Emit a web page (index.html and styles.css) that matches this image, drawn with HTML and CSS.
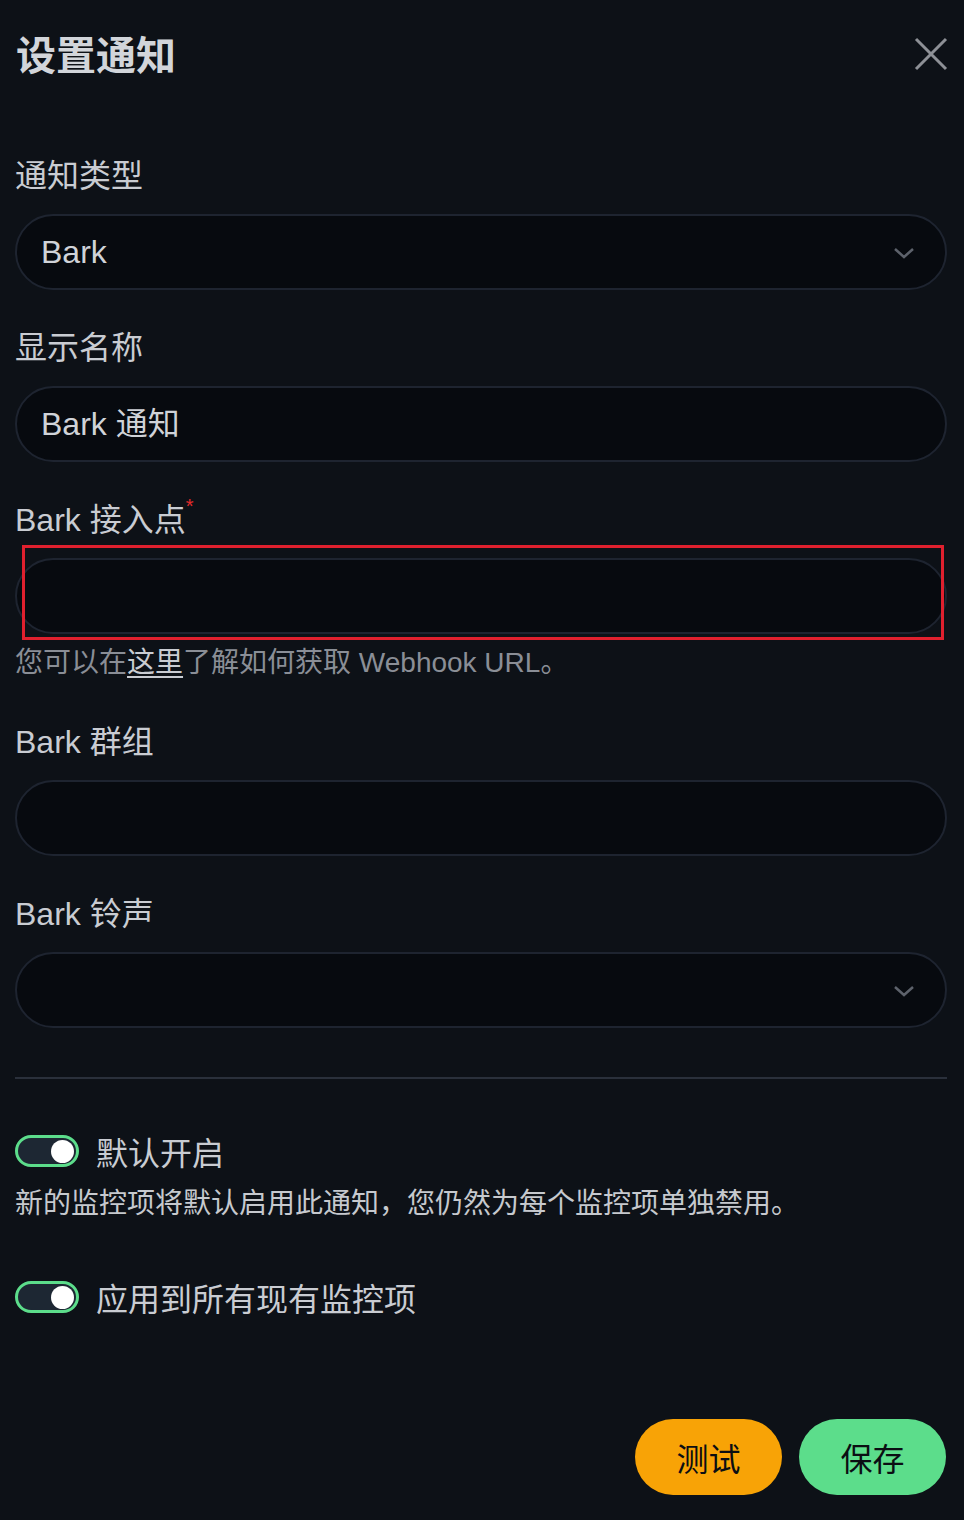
FILE: index.html
```html
<!DOCTYPE html>
<html lang="zh-CN">
<head>
    <meta charset="UTF-8">
    <meta name="viewport" content="width=device-width, initial-scale=1.0">
    <title>设置通知</title>
    <link rel="stylesheet" href="styles.css">
</head>
<body>
    <div class="modal">
        <div class="modal-header">
            <h1 class="modal-title">设置通知</h1>
            <button class="btn-close" aria-label="关闭">
                <svg width="34" height="34" viewBox="0 0 34 34">
                    <path d="M2 2 L32 32 M32 2 L2 32" stroke="#8d9096" stroke-width="3" fill="none"/>
                </svg>
            </button>
        </div>

        <div class="field">
            <label class="form-label">通知类型</label>
            <div class="form-select">
                <span>Bark</span>
                <svg class="chevron" width="22" height="14" viewBox="0 0 22 14">
                    <path d="M2 3 L11 11 L20 3" stroke="#5d626b" stroke-width="2.5" fill="none"/>
                </svg>
            </div>
        </div>

        <div class="field">
            <label class="form-label">显示名称</label>
            <div class="form-control">Bark 通知</div>
        </div>

        <div class="field">
            <label class="form-label">Bark 接入点<span class="required">*</span></label>
            <div class="input-wrap">
                <div class="form-control"></div>
                <div class="highlight"></div>
            </div>
            <div class="form-text">您可以在<a href="#">这里</a>了解如何获取 Webhook URL。</div>
        </div>

        <div class="field">
            <label class="form-label">Bark 群组</label>
            <div class="form-control"></div>
        </div>

        <div class="field">
            <label class="form-label">Bark 铃声</label>
            <div class="form-select">
                <span></span>
                <svg class="chevron" width="22" height="14" viewBox="0 0 22 14">
                    <path d="M2 3 L11 11 L20 3" stroke="#5d626b" stroke-width="2.5" fill="none"/>
                </svg>
            </div>
        </div>

        <hr class="divider">

        <div class="switch-row">
            <span class="switch"><span class="knob"></span></span>
            <span class="switch-label">默认开启</span>
        </div>
        <div class="switch-desc">新的监控项将默认启用此通知，您仍然为每个监控项单独禁用。</div>

        <div class="switch-row second">
            <span class="switch"><span class="knob"></span></span>
            <span class="switch-label">应用到所有现有监控项</span>
        </div>

        <div class="modal-footer">
            <button class="btn btn-warning">测试</button>
            <button class="btn btn-primary">保存</button>
        </div>
    </div>
</body>
</html>
```

FILE: styles.css
```css
body {
    margin: 0;
    background-color: #0d1117;
    color: #c9ccd2;
    font-family: 'Liberation Sans', 'Noto Sans CJK SC', sans-serif;
}

.modal {
    padding: 0 17px 0 15px;
}

.modal-header {
    display: flex;
    align-items: center;
    justify-content: space-between;
    padding-top: 26px;
    margin-bottom: 66px;
}
.modal-title {
    margin: 0;
    font-size: 40px;
    line-height: 60px;
    font-weight: bold;
    color: #d2d5da;
    padding-left: 1px;
}
.btn-close {
    background: none;
    border: none;
    padding: 0;
    margin-right: -1px;
    margin-top: -4px;
    width: 34px;
    height: 34px;
}

.field {
    margin-bottom: 34px;
}
.form-label {
    display: block;
    font-size: 32px;
    line-height: 48px;
    margin-bottom: 14px;
    color: #c9ccd2;
}
.required {
    color: #e32b2b;
    font-size: 20px;
    vertical-align: top;
    line-height: 20px;
}

.form-control,
.form-select {
    box-sizing: border-box;
    height: 76px;
    border: 2px solid #1e2430;
    border-radius: 38px;
    background-color: #070a0f;
    padding: 0 24px;
    font-size: 32px;
    line-height: 72px;
    color: #d0d3d8;
}
.form-select {
    display: flex;
    align-items: center;
    justify-content: space-between;
    padding-right: 30px;
}
.chevron {
    margin-top: 2px;
}

.input-wrap {
    position: relative;
}
.highlight {
    position: absolute;
    left: 7px;
    right: 3px;
    top: -13px;
    bottom: -6px;
    border: 3px solid #e0202e;
}

.form-text {
    margin-top: 8px;
    font-size: 28px;
    line-height: 42px;
    color: #8a8e96;
}
.form-text a {
    color: #c9ccd2;
    text-decoration: underline;
    text-underline-offset: 4px;
}

.divider {
    border: none;
    border-top: 2px solid #2a303b;
    margin: 49px 0 48px;
}

.switch-row {
    display: flex;
    align-items: center;
    height: 48px;
}
.switch-row.second {
    margin-top: 48px;
}
.switch {
    box-sizing: border-box;
    width: 64px;
    height: 32px;
    border: 3px solid #5cdd8b;
    border-radius: 16px;
    background-color: #1d2733;
    display: flex;
    align-items: center;
    justify-content: flex-end;
    padding-right: 2px;
}
.knob {
    width: 23px;
    height: 23px;
    border-radius: 50%;
    background-color: #fff;
}
.switch-label {
    margin-left: 17px;
    font-size: 32px;
    color: #c9ccd2;
}
.switch-desc {
    margin-top: 8px;
    font-size: 28px;
    line-height: 42px;
    color: #c6c9ce;
}

.modal-footer {
    display: flex;
    justify-content: flex-end;
    gap: 17px;
    margin-top: 98px;
}
.btn {
    width: 147px;
    height: 76px;
    border: none;
    border-radius: 38px;
    font-family: 'Liberation Sans', 'Noto Sans CJK SC', sans-serif;
    font-size: 32px;
    color: #0b0e13;
}
.btn-warning {
    background-color: #f8a306;
}
.btn-primary {
    background-color: #5cdd8b;
    margin-right: 1px;
}
```
